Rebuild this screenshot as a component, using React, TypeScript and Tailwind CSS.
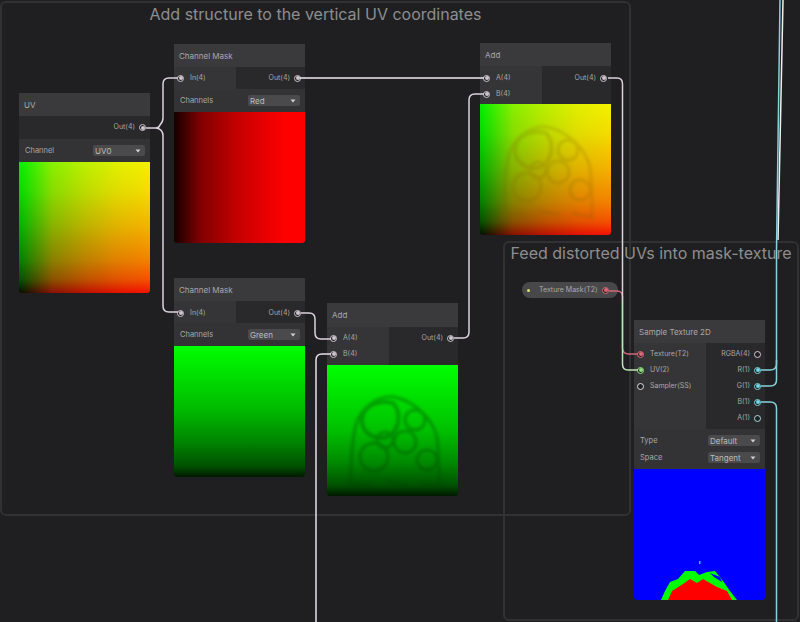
const font = { fontFamily: "Inter, 'Liberation Sans', sans-serif" };

function Port({ color = "#cfc6cf", filled = true }: { color?: string; filled?: boolean }) {
  return (
    <span
      className="flex h-[7px] w-[7px] shrink-0 items-center justify-center rounded-full border bg-[#1f1f22]"
      style={{ borderColor: color }}
    >
      {filled && <span className="h-[4px] w-[4px] rounded-full" style={{ background: color }} />}
    </span>
  );
}

type PortDef = { label: string; color?: string; filled?: boolean };

function InRow({ label, color, filled }: PortDef) {
  return (
    <div className="flex h-4 items-center gap-[6px] pl-[3px]">
      <Port color={color} filled={filled} />
      <span>{label}</span>
    </div>
  );
}

function OutRow({ label, color, filled }: PortDef) {
  return (
    <div className="flex h-4 items-center justify-end gap-[4px] pr-[4px]">
      <span>{label}</span>
      <Port color={color} filled={filled} />
    </div>
  );
}

function Dropdown({ value }: { value: string }) {
  return (
    <div className="flex h-[11px] w-[52px] items-center justify-between rounded-[2px] bg-[#4a4a4d] pl-[2px] pr-[4px] text-[8px] text-[#bcbcbc]">
      <span>{value}</span>
      <svg width="6" height="4" viewBox="0 0 6 4">
        <path d="M0.5 0.5h5L3 3.5z" fill="#d0d0d0" />
      </svg>
    </div>
  );
}

function Control({ label, value }: { label: string; value: string }) {
  return (
    <div className="flex h-[17px] items-center justify-between pl-[1px] text-[7.5px] text-[#a8a8a8]">
      <span>{label}</span>
      <Dropdown value={value} />
    </div>
  );
}

function Blobs({ color, opacity, dy = 0 }: { color: string; opacity: number; dy?: number }) {
  return (
    <svg className="absolute inset-0" width="131" height="131" viewBox="0 0 131 131">
      <defs>
        <filter id={`soft-${dy}`}>
          <feGaussianBlur stdDeviation="1.5" />
        </filter>
      </defs>
      <g
        fill="none"
        stroke={color}
        strokeWidth="3"
        opacity={opacity}
        filter={`url(#soft-${dy})`}
        transform={`translate(0 ${dy})`}
      >
        <path d="M66 38C74 46 74 66 60 72C46 76 34 66 35 54C36 42 50 34 66 38Z" strokeWidth="4" />
        <circle cx="88" cy="55" r="10" />
        <circle cx="78" cy="77" r="11" />
        <circle cx="47" cy="92" r="14" />
        <circle cx="100" cy="95" r="10" />
        <circle cx="58" cy="75" r="8" />
        <path d="M23 125C24 95 25 65 32 52C40 38 55 30 67 32C88 36 106 55 110 72C112 90 112 110 112 125" />
        <path d="M22 118L45 120M60 116L80 120M92 118L112 122" />
      </g>
    </svg>
  );
}

function Preview({ children, className }: { children?: React.ReactNode; className: string }) {
  return <div className={`relative h-[131px] overflow-hidden rounded-b-[3px] ${className}`}>{children}</div>;
}

const uvBg =
  "bg-[linear-gradient(to_right,#000,#870000_25%,#bb0000_50%,#e10000_75%,#f50000),linear-gradient(to_top,#001000,#005000_10%,#008000_25%,#00b000_50%,#00dc00_78%,#00f000)] bg-blend-screen";

function Ports({
  left,
  right,
  leftWidth,
  padding = "py-[3px]",
}: {
  left: PortDef[];
  right: PortDef[];
  leftWidth: string;
  padding?: string;
}) {
  return (
    <div className="flex bg-[#29292c] text-[7px] text-[#a8a8a8]">
      <div className={`bg-[#353538] ${padding} ${leftWidth}`}>
        {left.map((p) => (
          <InRow key={p.label} {...p} />
        ))}
      </div>
      <div className={`flex-1 ${padding}`}>
        {right.map((p) => (
          <OutRow key={p.label} {...p} />
        ))}
      </div>
    </div>
  );
}

function Node({
  title,
  className,
  headerHeight = "h-[23px]",
  children,
}: {
  title: string;
  className: string;
  headerHeight?: string;
  children: React.ReactNode;
}) {
  return (
    <div className={`absolute w-[131px] ${className}`}>
      <div className={`flex items-center bg-[#3a3a3d] pl-[5px] text-[8px] text-[#a8a8a8] ${headerHeight}`}>
        {title}
      </div>
      {children}
    </div>
  );
}

const wires = [
  { c: "#dcd2dc", d: "M146 128H156Q159 128 160 125Q163 122 163 118V84Q163 78 169 78H178" },
  { c: "#dcd2dc", d: "M156 128Q163 129 163 136V306Q163 312 169 312H178" },
  { c: "#f0eaf0", d: "M300 78H484" },
  { c: "#dcd2dc", d: "M301 313H309Q315 313 315 319V333Q315 339 321 339H331" },
  { c: "#e8e0e8", d: "M331 354H322Q316 354 316 360V622" },
  { c: "#dcd2dc", d: "M454 338H463Q469 338 469 332V100Q469 94 475 94H484" },
  { c: "#d06878", d: "M609 291H617Q622.5 291 622.5 297V348Q622.5 354 629 354H638" },
  { c: "#dcd2dc", d: "M608 78H617Q622.5 78 622.5 84V300" },
  { c: "#c0e4b8", d: "M622.5 300V364Q622.5 370 628 370H638" },
  { c: "#f0f0f0", d: "M783 0L778 240" },
  { c: "#86d2da", d: "M780 0L776.5 250V364Q776.5 370 770 370H761" },
  { c: "#86d2da", d: "M776.5 360V380Q776.5 386 770 386H761" },
  { c: "#86d2da", d: "M761 402H770Q776.5 402 776.5 408V622" },
];

export default function App() {
  return (
    <div className="relative h-[622px] w-[800px] overflow-hidden bg-[#1f1f22] text-[7px] text-[#a8a8a8]" style={font}>
      {/* groups */}
      <div className="absolute left-[0px] top-[1px] h-[515px] w-[631px] rounded-[6px] border-2 border-[#313134] pt-[1px] text-center text-[16px] leading-[20px] text-[#8e8e8e]">
        Add structure to the vertical UV coordinates
      </div>
      <div className="absolute left-[503px] top-[241px] h-[380px] w-[296px] rounded-[6px] border-2 border-[#313134] text-center text-[16px] leading-[20px] text-[#8e8e8e]">
        Feed distorted UVs into mask-texture
      </div>

      <Node title="UV" className="left-[19px] top-[93px]">
        <div className="flex h-[23px] flex-col justify-center bg-[#29292c]">
          <OutRow label="Out(4)" />
        </div>
        <div className="bg-[#333336] px-[5px] py-[3px]">
          <Control label="Channel" value="UV0" />
        </div>
        <Preview className={uvBg} />
      </Node>

      <Node title="Channel Mask" className="left-[174px] top-[44px]">
        <Ports leftWidth="w-[62px]" left={[{ label: "In(4)" }]} right={[{ label: "Out(4)" }]} />
        <div className="bg-[#333336] px-[5px] py-[3px]">
          <Control label="Channels" value="Red" />
        </div>
        <Preview className="bg-[linear-gradient(to_right,#150000,#800000_20%,#c80000_50%,#ff0000_85%)]" />
      </Node>

      <Node title="Channel Mask" className="left-[174px] top-[278px]">
        <Ports
          leftWidth="w-[62px]"
          padding="pt-[4px] pb-[2px]"
          left={[{ label: "In(4)" }]}
          right={[{ label: "Out(4)" }]}
        />
        <div className="bg-[#333336] px-[5px] py-[3px]">
          <Control label="Channels" value="Green" />
        </div>
        <Preview className="bg-[linear-gradient(to_bottom,#00ff00,#00b800_50%,#008000_75%,#005000_92%,#001800)]" />
      </Node>

      <Node title="Add" className="left-[327px] top-[303px]" headerHeight="h-[24px]">
        <Ports
          leftWidth="w-[62px]"
          left={[{ label: "A(4)" }, { label: "B(4)" }]}
          right={[{ label: "Out(4)" }]}
        />
        <Preview className="bg-[linear-gradient(to_bottom,#00ff00,#00c000_50%,#008800_75%,#005000_92%,#001800)]">
          <Blobs color="#004800" opacity={0.38} />
        </Preview>
      </Node>

      <Node title="Add" className="left-[480px] top-[43px]">
        <Ports
          leftWidth="w-[62px]"
          padding="pt-[4px] pb-[2px]"
          left={[{ label: "A(4)" }, { label: "B(4)" }]}
          right={[{ label: "Out(4)" }]}
        />
        <Preview className={uvBg}>
          <Blobs color="#806000" opacity={0.22} dy={-9} />
        </Preview>
      </Node>

      <div className="absolute left-[522px] top-[282px] flex h-4 w-[96px] items-center whitespace-nowrap rounded-full bg-[#48484b] pl-[5px] text-[#a8a8a8]">
        <span className="h-[3px] w-[3px] shrink-0 rounded-full bg-[#d8e870]" />
        <span className="ml-[9px] w-[59px]">Texture Mask(T2)</span>
        <span className="ml-[4px]">
          <Port color="#e06a78" />
        </span>
      </div>

      <Node title="Sample Texture 2D" className="left-[634px] top-[320px]">
        <div className="flex h-[86px] bg-[#29292c] text-[7px] text-[#a8a8a8]">
          <div className="w-[72px] bg-[#353538] py-[3px]">
            <InRow label="Texture(T2)" color="#e06a78" />
            <InRow label="UV(2)" color="#90e080" />
            <InRow label="Sampler(SS)" color="#e0e0e0" filled={false} />
          </div>
          <div className="flex-1 py-[3px]">
            <OutRow label="RGBA(4)" color="#e0c8d8" filled={false} />
            <OutRow label="R(1)" color="#6fd8e0" />
            <OutRow label="G(1)" color="#6fd8e0" />
            <OutRow label="B(1)" color="#6fd8e0" />
            <OutRow label="A(1)" color="#a0e0e0" filled={false} />
          </div>
        </div>
        <div className="bg-[#333336] px-[5px] py-[3px]">
          <Control label="Type" value="Default" />
          <Control label="Space" value="Tangent" />
        </div>
        <Preview className="bg-[#0000ff]">
          <svg className="absolute inset-0" width="131" height="131" viewBox="0 0 131 131">
            <path
              d="M27 131L31 122L36 113L44 110L51 102L61 102L65 106L73 103L81 102L89 112L96 122L103 131Z"
              fill="#00ff00"
            />
            <path d="M76 104L86 108L88 113L80 108Z" fill="#0000ff" />
            <path
              d="M34 131L38 122L49 115L56 110L63 114L69 110L83 118L93 122L98 131Z"
              fill="#ff0000"
            />
            <rect x="65" y="92" width="1.5" height="3" fill="#40c0e0" />
          </svg>
        </Preview>
      </Node>

      {/* wires lie over the nodes and titles */}
      <svg className="pointer-events-none absolute inset-0" width="800" height="622" viewBox="0 0 800 622" fill="none">
        {wires.map((w) => (
          <path key={w.d} d={w.d} stroke={w.c} strokeWidth="1.5" />
        ))}
      </svg>
    </div>
  );
}
